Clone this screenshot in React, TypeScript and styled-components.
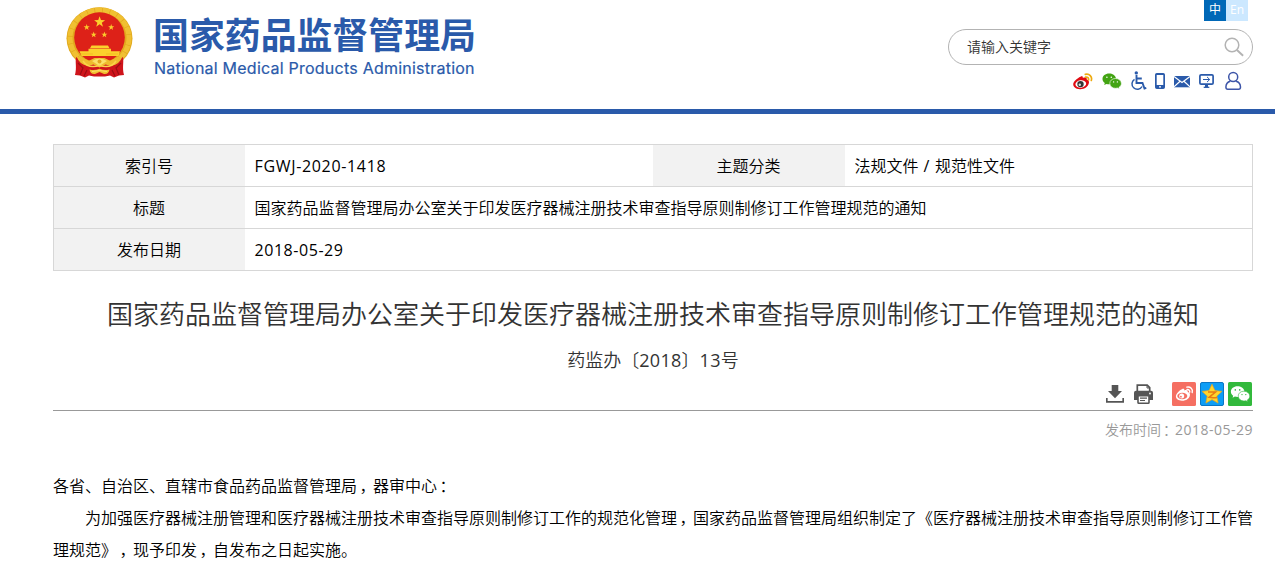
import React from 'react';
import styled, { createGlobalStyle } from 'styled-components';

const GlobalStyle = createGlobalStyle`
  * { box-sizing: border-box; }
  html, body { margin: 0; padding: 0; background: #fff; overflow: hidden; }
  body {
    font-family: 'Open Sans', 'Noto Sans CJK SC', sans-serif;
    font-size: 16px;
    font-weight: 350;
    color: #000;
    text-spacing-trim: space-all;
  }
  svg { display: block; }
`;

const Page = styled.div`
  height: 577px;
  overflow: hidden;
`;

const Header = styled.header`
  display: flex;
  justify-content: space-between;
  height: 114px;
  border-bottom: 5px solid #2a5aaa;
`;

const Brand = styled.div`
  display: flex;
  padding-left: 50px;
`;

const BrandText = styled.div`
  display: flex;
  flex-direction: column;
  padding: 7px 0 0 3px;
  color: #2a5aaa;
  white-space: nowrap;
`;

const BrandName = styled.div`
  font: 700 35.9px/52px 'Noto Sans CJK SC', sans-serif;
  height: 50px;
`;

const BrandEnglish = styled.div`
  font: 400 16px/22px Inter, sans-serif;
  letter-spacing: 0.23px;
  padding-left: 1px;
  -webkit-text-stroke: 0.2px #2a5aaa;
`;

const Tools = styled.div`
  display: flex;
  flex-direction: column;
  align-items: flex-end;
  padding-right: 22px;
`;

const Languages = styled.div`
  display: flex;
  height: 21px;
  padding-right: 5px;
`;

const Language = styled.span<{ $active?: boolean }>`
  width: 22px;
  height: 21px;
  background: ${(p) => (p.$active ? '#0068b7' : '#cce8ff')};
  color: #fff;
  font-size: 12px;
  font-weight: 400;
  line-height: 20px;
  text-align: center;
`;

const SearchBox = styled.div`
  display: flex;
  align-items: center;
  justify-content: space-between;
  width: 305px;
  height: 36px;
  margin-top: 8px;
  padding: 0 7px 0 18px;
  border: 1px solid #b3b3b3;
  border-radius: 18px;
  color: #333;
  font-size: 14px;
`;

const SearchHint = styled.span`
  padding-bottom: 2px;
`;

const IconRow = styled.div`
  display: flex;
  margin-top: 6px;
  padding-right: 11px;
`;

const IconSlot = styled.span<{ $gap: number }>`
  margin-left: ${(p) => p.$gap}px;
`;

const Main = styled.main`
  width: 1200px;
  margin: 30px 0 0 53px;
`;

const InfoTable = styled.div`
  border: 1px solid #d7d7d7;
  border-bottom: 0;
`;

const InfoRow = styled.div`
  display: flex;
  height: 42px;
  line-height: 42px;
  border-bottom: 1px solid #d7d7d7;
`;

const Label = styled.div<{ $first?: boolean }>`
  width: ${(p) => (p.$first ? 191 : 192)}px;
  padding-right: 1px;
  background: #f2f2f2;
  text-align: center;
`;

const Value = styled.div<{ $width?: number }>`
  ${(p) => (p.$width ? `width: ${p.$width}px;` : 'flex: 1;')}
  padding-left: 9.5px;
  white-space: nowrap;
`;

const Latin = styled.span<{ $track: number }>`
  font-weight: 400;
  letter-spacing: ${(p) => p.$track}px;
`;

const Title = styled.h1`
  margin: 23px 0 0;
  font-size: 26px;
  font-weight: 350;
  line-height: 40px;
  text-align: center;
  white-space: nowrap;
  color: #333;
`;

const DocNumber = styled.div`
  margin-top: 11px;
  font-size: 18px;
  line-height: 30px;
  text-align: center;
  color: #333;
`;

const ActionBar = styled.div`
  display: flex;
  justify-content: flex-end;
  height: 35px;
  margin-top: 1px;
  padding: 6px 1px 0 0;
  border-bottom: 1px solid #999;
`;

const Published = styled.div`
  font-size: 14px;
  line-height: 20px;
  margin-top: 9px;
  text-align: right;
  color: #999;
`;

const Article = styled.article`
  margin: 30px -2px 0 0;
  line-height: 32px;
`;

const Paragraph = styled.p<{ $indent?: boolean }>`
  margin: 0;
  text-indent: ${(p) => (p.$indent ? '2em' : '0')};
  word-break: break-all;
  line-break: anywhere;
`;

const Mark = styled.span`
  padding: 0 0.35em 0 0.15em;
  font-feature-settings: 'halt';
`;

const starPoints = (cx: number, cy: number, r: number) =>
  Array.from({ length: 10 }, (_, i) => {
    const a = (Math.PI / 5) * i - Math.PI / 2;
    const d = i % 2 ? r * 0.4 : r;
    return `${(cx + d * Math.cos(a)).toFixed(2)},${(cy + d * Math.sin(a)).toFixed(2)}`;
  }).join(' ');

const Emblem = () => (
  <svg width="100" height="90" viewBox="0 0 100 90">
    <ellipse cx="49.500" cy="38.300" rx="33" ry="31" fill="#e2a91d" />
    <ellipse cx="49.500" cy="38" rx="29.500" ry="28" fill="none" stroke="#f0c032" strokeWidth="5" strokeDasharray="7 .7" />
    <circle cx="49.500" cy="37.500" r="25.300" fill="#dd2118" />
    <path d="M26 57c-1 6 1 10-1 18l5 .5 5 2 4-2 5 1h11l5-1 4 2 5-2 5-.5c-2-8 0-12-1-18l-11 7H37z" fill="#cf141b" />
    <path d="M28 63l5 5-3 7M71 63l-5 5 3 7M37 70l-3 6M62 70l3 6" stroke="#9d0d13" strokeWidth="1.200" fill="none" />
    <polygon points={starPoints(49.6, 22, 5.8)} fill="#fbd12c" />
    {[[36.7, 27.3], [61.2, 27.3], [43.7, 34.7], [54.4, 34.7]].map(([x, y]) => (
      <polygon key={x} points={starPoints(x, y, 3.2)} fill="#fbc92c" />
    ))}
    <path d="M41.500 45.500h16.500l1.500 2.700h-19.500zM38.500 48.700h22.500v2.500H38.500zM29.500 51.300h40.500l-1.500 4.700h-37z" fill="#fbd12c" />
    <path d="M31 54h12M56 54h12" stroke="#f0b020" strokeWidth="0.600" />
    <path d="M26.500 56.500q8 1 12 4.500l6-3h10l6 3q4-3.500 12-4.500-3 8-11 9.500l-6-1.500-6 3-6-3-6 1.500q-8-1.500-11-9.500z" fill="#eebc2e" />
    <path d="M42 61q7.500-5 15 0l-7.500 5z" fill="#fae06a" />
    <circle cx="49.500" cy="61.500" r="2" fill="#e4a61f" />
    <path d="M33 61q5 8 16.500 4.500Q61 69 66 61" fill="none" stroke="#fbd34b" strokeWidth="1.500" />
    <path d="M39.500 69.500q5 1.500 10-.7 5 2.200 10 .7-1 5-5.500 4.500l-4.500-2-4.500 2q-4.500.5-5.500-4.500z" fill="#f1bf31" />
    <path d="M42 71.500l7.500-1 7.500 1" fill="none" stroke="#fbe06a" />
  </svg>
);

const SearchIcon = () => (
  <svg width="22" height="22" viewBox="0 0 22 22" fill="none" stroke="#b3b3b3" strokeWidth="1.500">
    <circle cx="9" cy="9" r="6.800" />
    <path d="M13.900 14l6.200 5.700" strokeWidth="1.900" />
  </svg>
);

const WeiboIcon = () => (
  <svg width="20" height="20" viewBox="0 0 20 20">
    <path d="M7.500 5.700c1.400-.8 2.700-.4 2.300 1.200 2-.9 4.600-.6 3.900 1.600 2 .7 2.600 1.900 2.200 3.600-.7 3.800-4.600 6.300-9 6.100C2.600 18 .1 16 .2 13.100.4 10.500 4.300 7.100 7.500 5.700z" fill="#e00b12" />
    <ellipse cx="7.800" cy="13" rx="5.400" ry="3.700" fill="#fff" transform="rotate(-8 7.800 13)" />
    <circle cx="7.500" cy="13.100" r="3.200" fill="#343434" />
    <circle cx="6.800" cy="13.800" r="1.200" fill="#ddd" />
    <path d="M12.300 3.400c4-1 7.200 2 6 6M12.600 6.200c1.900-.4 3.400.9 2.900 2.800" fill="none" stroke="#edaa10" strokeWidth="1.700" strokeLinecap="round" />
  </svg>
);

const WechatShape = ({ color, hole }: { color: string; hole: string }) => (
  <>
    <path d="M7 2.600c-3.600 0-6.500 2.400-6.500 5.400 0 1.700.9 3.100 2.300 4.100l-.6 2 2.300-1.200c2 .6 3.400.5 4.600.1L14 7.200C13.400 4.500 10.500 2.600 7 2.600z" fill={color} />
    <path d="M13.500 7.500c-3.300 0-5.700 2.100-5.700 4.900 0 2.700 2.600 4.900 5.700 4.900.7 0 1.400-.1 2-.3l1.900 1.100-.5-1.700c1.500-.9 2.500-2.300 2.500-4 0-2.800-2.700-4.900-5.900-4.900z" fill={color} stroke={hole} strokeWidth=".6" />
    <g fill={hole}>
      <circle cx="4.900" cy="6.200" r=".8" />
      <circle cx="9.300" cy="6.200" r=".8" />
      <circle cx="11.600" cy="10.900" r=".7" />
      <circle cx="15.400" cy="10.900" r=".7" />
    </g>
  </>
);

const WechatIcon = () => (
  <svg width="20" height="20" viewBox="0 0 20 20">
    <WechatShape color="#43a413" hole="#fff" />
  </svg>
);

const WheelchairIcon = () => (
  <svg width="17" height="20" viewBox="0 0 17 20" fill="none" stroke="#2a5aaa">
    <circle cx="6.300" cy="1.900" r="1.700" fill="#2a5aaa" stroke="none" />
    <path d="M6.500 4v8h6l2 5.500 1.800-.6M6.800 7.500h5" strokeWidth="1.900" />
    <path d="M4.500 8.300a5.400 5.400 0 1 0 7.600 7.200" strokeWidth="1.500" />
  </svg>
);

const PhoneIcon = () => (
  <svg width="10" height="20" viewBox="0 0 10 20">
    <path fillRule="evenodd" d="M1.800 2h6.400Q10 2 10 3.800v12.400Q10 18 8.200 18H1.800Q0 18 0 16.200V3.800Q0 2 1.800 2zM1.700 4v10h6.600V4zM4 15.200v1.400h2v-1.400z" fill="#2a5aaa" />
  </svg>
);

const MailIcon = () => (
  <svg width="16" height="20" viewBox="0 0 16 20">
    <rect y="5" width="16" height="11.300" fill="#2a5aaa" />
    <path d="M0 5.600l8 5.800 8-5.800M0 15.700l5.800-5.200M16 15.700l-5.800-5.200" fill="none" stroke="#fff" strokeWidth="1.200" />
  </svg>
);

const MonitorIcon = () => (
  <svg width="15" height="20" viewBox="0 0 15 20" fill="none" stroke="#2a5aaa">
    <rect x=".9" y="3.900" width="13.200" height="9.200" rx="1.200" strokeWidth="1.700" />
    <path d="M4 8.500h6.500M8 5.900l2.700 2.600L8 11.100" strokeWidth="1" />
    <path d="M7.500 13v3" strokeWidth="3" />
    <path d="M4.700 16.300h5.600" strokeWidth="1.300" />
  </svg>
);

const UserIcon = () => (
  <svg width="17" height="20" viewBox="0 0 17 20" fill="none" stroke="#3d55a8" strokeWidth="1.500">
    <circle cx="8.200" cy="6" r="4.500" />
    <path d="M5.300 10.300C2.500 11 1 13.300.9 16q0 2.300 1.900 2.300h10.800q1.900 0 1.900-2.300c-.1-2.700-1.600-5-4.400-5.700" />
  </svg>
);

const DownloadIcon = () => (
  <svg width="18" height="24" viewBox="0 0 18 24" fill="#555">
    <path d="M5.700 3h6.600v6H16l-7 7.300L2 9h3.700z" />
    <path d="M.8 16v3.800h16.400V16" fill="none" stroke="#555" strokeWidth="1.700" />
  </svg>
);

const PrinterIcon = () => (
  <svg width="19" height="24" viewBox="0 0 19 24">
    <path d="M3.300 9V3.200h9.900l2.500 2.500V9" fill="#fff" stroke="#555" strokeWidth="1.700" />
    <path d="M13 3v3h3" fill="none" stroke="#555" />
    <path d="M2 8.800h15q2 0 2 2v7.300h-4V14H4v4.100H0v-7.300q0-2 2-2z" fill="#555" />
    <rect x="4" y="13.700" width="11" height="7.500" rx=".8" fill="#fff" stroke="#555" strokeWidth="1.600" />
    <path d="M6 16.200h7M6 18.500h5" stroke="#555" strokeWidth="1.200" />
    <circle cx="16" cy="11.500" r=".9" fill="#fff" />
  </svg>
);

const ShareWeibo = () => (
  <svg width="24" height="24" viewBox="0 0 24 24">
    <rect width="24" height="24" rx="1.500" fill="#f56f62" />
    <path d="M10 7.200c1.400-.7 2.700-.3 2.300 1.300 2-.9 4-.4 3.300 1.600 2 .6 2.600 1.600 2.300 3.100-.5 3.500-4.200 5.700-8 5.500-3.500-.1-6-1.800-6-4.200 0-2.500 3-6 6.100-7.300z" fill="#fff" />
    <ellipse cx="10.300" cy="14" rx="5" ry="3.200" fill="#f56f62" />
    <circle cx="9.700" cy="14.100" r="2.500" fill="#fff" />
    <circle cx="8.900" cy="14.700" r=".9" fill="#f56f62" />
    <path d="M14.800 5.100c3.600-.8 6.400 1.900 5.400 5.400M15 7.600c1.900-.3 3.100 1 2.700 2.600" fill="none" stroke="#fff" strokeWidth="1.400" strokeLinecap="round" />
  </svg>
);

const ShareQzone = () => (
  <svg width="24" height="24" viewBox="0 0 24 24">
    <rect x=".5" y=".5" width="23" height="23" rx="1.500" fill="#0d9df5" stroke="#0b76c4" />
    <path d="M12 2.200l2.900 6.300 7 .9-5.100 4.700 1.300 7L12 17.600l-6.100 3.500 1.300-7L2.100 9.400l7-.9z" fill="#ffd52b" stroke="#f4a712" strokeWidth=".7" />
    <path d="M8 10.100h7.500L9 15.300q4 .8 8 .1" fill="none" stroke="#e87913" strokeWidth="1.500" />
  </svg>
);

const ShareWechat = () => (
  <svg width="24" height="24" viewBox="0 0 24 24">
    <rect width="24" height="24" rx="1.500" fill="#32b93c" />
    <g transform="translate(2.400 1.700)">
      <WechatShape color="#fff" hole="#32b93c" />
    </g>
  </svg>
);

const topIcons = [
  { gap: 0, Icon: WeiboIcon },
  { gap: 9, Icon: WechatIcon },
  { gap: 8, Icon: WheelchairIcon },
  { gap: 8, Icon: PhoneIcon },
  { gap: 9, Icon: MailIcon },
  { gap: 9, Icon: MonitorIcon },
  { gap: 11, Icon: UserIcon },
];

const actionIcons = [
  { gap: 0, Icon: DownloadIcon },
  { gap: 10, Icon: PrinterIcon },
  { gap: 19, Icon: ShareWeibo },
  { gap: 4, Icon: ShareQzone },
  { gap: 4, Icon: ShareWechat },
];

const documentTitle = '国家药品监督管理局办公室关于印发医疗器械注册技术审查指导原则制修订工作管理规范的通知';

export default function App() {
  return (
    <Page lang="zh-CN">
      <GlobalStyle />
      <Header>
        <Brand>
          <Emblem />
          <BrandText>
            <BrandName>国家药品监督管理局</BrandName>
            <BrandEnglish>National Medical Products Administration</BrandEnglish>
          </BrandText>
        </Brand>
        <Tools>
          <Languages>
            <Language $active>中</Language>
            <Language>En</Language>
          </Languages>
          <SearchBox>
            <SearchHint>请输入关键字</SearchHint>
            <SearchIcon />
          </SearchBox>
          <IconRow>
            {topIcons.map(({ gap, Icon }, i) => (
              <IconSlot key={i} $gap={gap}><Icon /></IconSlot>
            ))}
          </IconRow>
        </Tools>
      </Header>
      <Main>
        <InfoTable>
          <InfoRow>
            <Label $first>索引号</Label>
            <Value $width={408}><Latin $track={0.67}>FGWJ-2020-1418</Latin></Value>
            <Label>主题分类</Label>
            <Value>法规文件<Latin $track={0.8}> / </Latin>规范性文件</Value>
          </InfoRow>
          <InfoRow>
            <Label $first>标题</Label>
            <Value>{documentTitle}</Value>
          </InfoRow>
          <InfoRow>
            <Label $first>发布日期</Label>
            <Value><Latin $track={0.55}>2018-05-29</Latin></Value>
          </InfoRow>
        </InfoTable>
        <Title>{documentTitle}</Title>
        <DocNumber>药监办〔<Latin $track={0.3}>2018</Latin>〕<Latin $track={0.3}>13</Latin>号</DocNumber>
        <ActionBar>
          {actionIcons.map(({ gap, Icon }, i) => (
            <IconSlot key={i} $gap={gap}><Icon /></IconSlot>
          ))}
        </ActionBar>
        <Published>发布时间<Mark>：</Mark><Latin $track={0.5}>2018-05-29</Latin></Published>
        <Article>
          <Paragraph>各省、自治区、直辖市食品药品监督管理局<Mark>，</Mark>器审中心<Mark>：</Mark></Paragraph>
          <Paragraph $indent>
            为加强医疗器械注册管理和医疗器械注册技术审查指导原则制修订工作的规范化管理<Mark>，</Mark>国家药品监督管理局组织制定了《医疗器械注册技术审查指导原则制修订工作管理规范》<Mark>，</Mark>现予印发<Mark>，</Mark>自发布之日起实施。
          </Paragraph>
        </Article>
      </Main>
    </Page>
  );
}
